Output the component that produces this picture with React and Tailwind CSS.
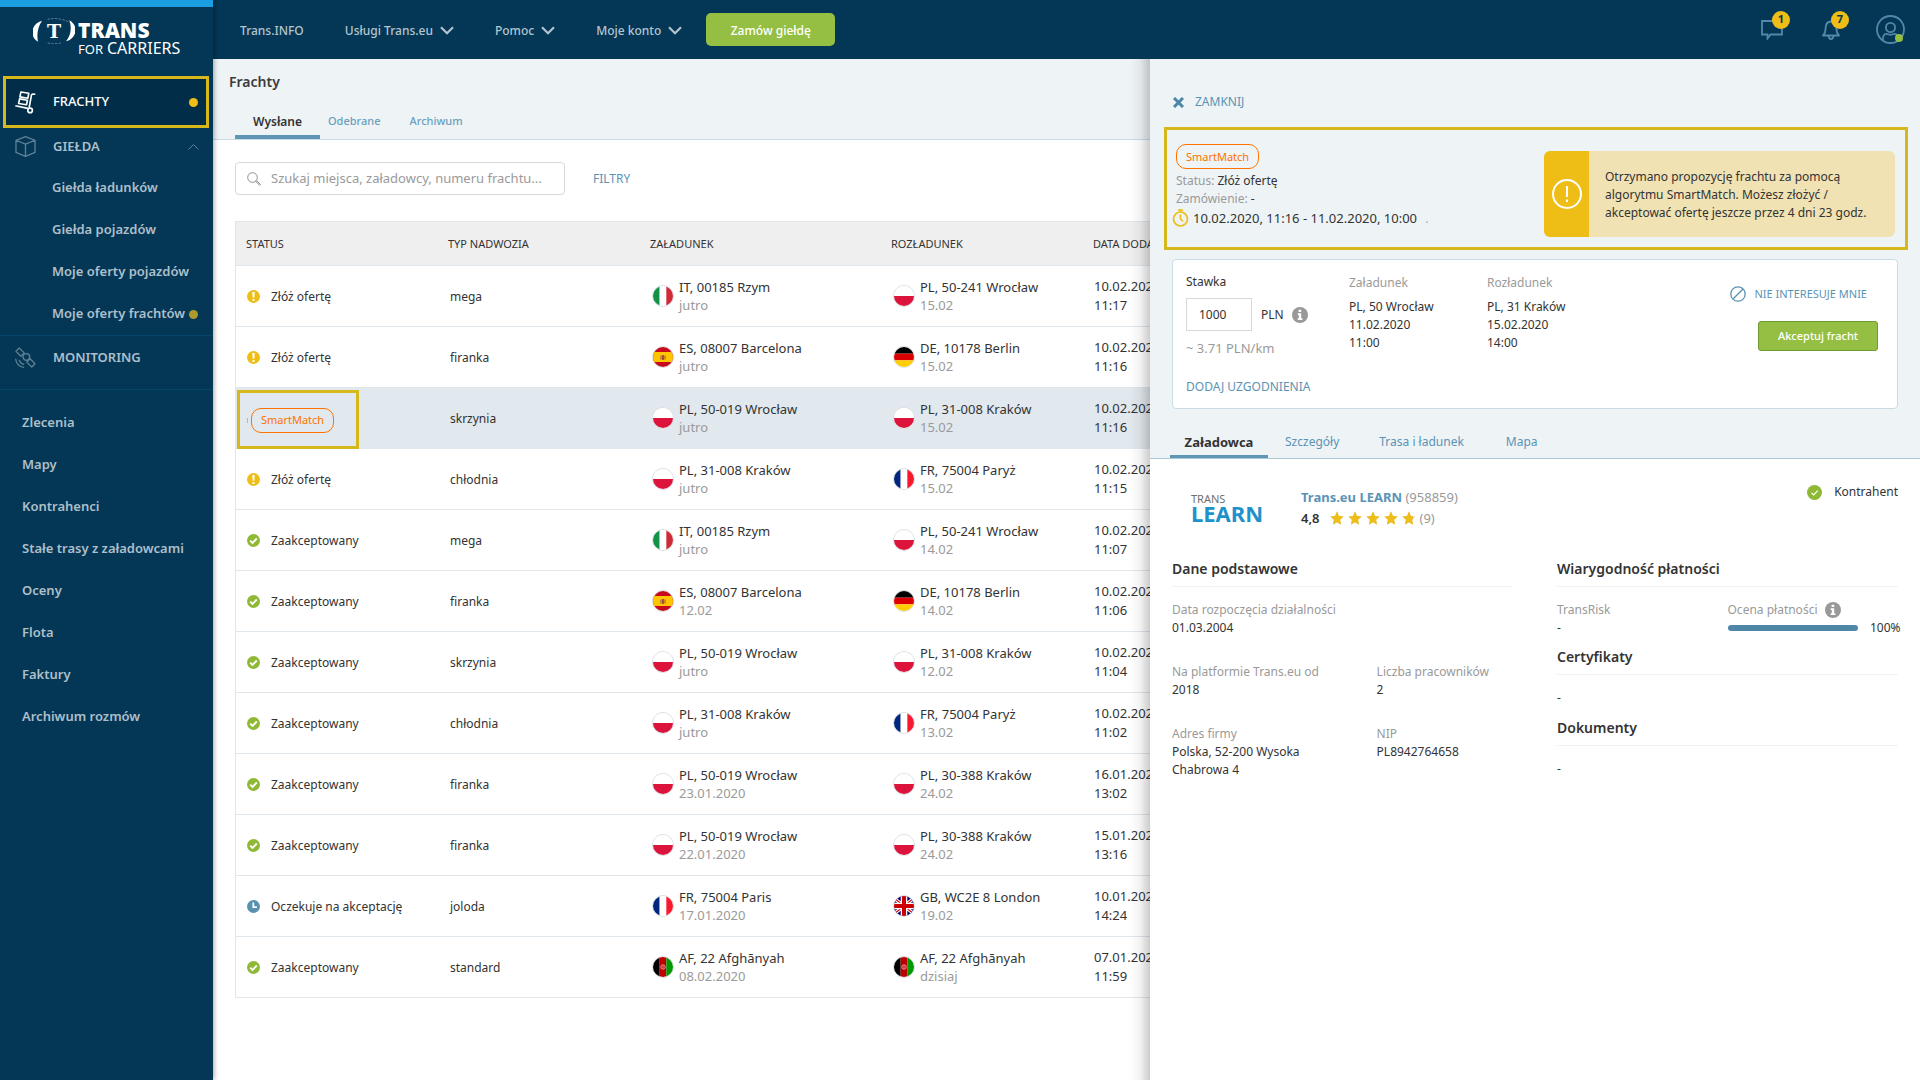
const NAV = [
  { label: "Trans.INFO", menu: false },
  { label: "Usługi Trans.eu", menu: true },
  { label: "Pomoc", menu: true },
  { label: "Moje konto", menu: true },
];

const EXCHANGE = [
  { label: "Giełda ładunków" },
  { label: "Giełda pojazdów" },
  { label: "Moje oferty pojazdów" },
  { label: "Moje oferty frachtów", dot: true },
];

const LINKS = [
  "Zlecenia",
  "Mapy",
  "Kontrahenci",
  "Stałe trasy z załadowcami",
  "Oceny",
  "Flota",
  "Faktury",
  "Archiwum rozmów",
];

const ROWS = [
  ["offer", "mega", "it", "IT, 00185 Rzym", "jutro", "pl", "PL, 50-241 Wrocław", "15.02", "10.02.2020", "11:17"],
  ["offer", "firanka", "es", "ES, 08007 Barcelona", "jutro", "de", "DE, 10178 Berlin", "15.02", "10.02.2020", "11:16"],
  ["smart", "skrzynia", "pl", "PL, 50-019 Wrocław", "jutro", "pl", "PL, 31-008 Kraków", "15.02", "10.02.2020", "11:16"],
  ["offer", "chłodnia", "pl", "PL, 31-008 Kraków", "jutro", "fr", "FR, 75004 Paryż", "15.02", "10.02.2020", "11:15"],
  ["done", "mega", "it", "IT, 00185 Rzym", "jutro", "pl", "PL, 50-241 Wrocław", "14.02", "10.02.2020", "11:07"],
  ["done", "firanka", "es", "ES, 08007 Barcelona", "12.02", "de", "DE, 10178 Berlin", "14.02", "10.02.2020", "11:06"],
  ["done", "skrzynia", "pl", "PL, 50-019 Wrocław", "jutro", "pl", "PL, 31-008 Kraków", "12.02", "10.02.2020", "11:04"],
  ["done", "chłodnia", "pl", "PL, 31-008 Kraków", "jutro", "fr", "FR, 75004 Paryż", "13.02", "10.02.2020", "11:02"],
  ["done", "firanka", "pl", "PL, 50-019 Wrocław", "23.01.2020", "pl", "PL, 30-388 Kraków", "24.02", "16.01.2020", "13:02"],
  ["done", "firanka", "pl", "PL, 50-019 Wrocław", "22.01.2020", "pl", "PL, 30-388 Kraków", "24.02", "15.01.2020", "13:16"],
  ["wait", "joloda", "fr", "FR, 75004 Paris", "17.01.2020", "gb", "GB, WC2E 8 London", "19.02", "10.01.2020", "14:24"],
  ["done", "standard", "af", "AF, 22 Afghānyah", "08.02.2020", "af", "AF, 22 Afghānyah", "dzisiaj", "07.01.2020", "11:59"],
];

const STATUS_TEXT = { offer: "Złóż ofertę", done: "Zaakceptowany", wait: "Oczekuje na akceptację" };

function Stripes({ colors, vertical }) {
  const size = 20 / colors.length;
  return colors.map((c, i) =>
    vertical ? (
      <rect key={i} x={i * size} y="0" width={size} height="20" fill={c} />
    ) : (
      <rect key={i} x="0" y={i * size} width="20" height={size} fill={c} />
    )
  );
}

function Flag({ code }) {
  return (
    <svg viewBox="0 0 20 20" className="size-[22px] shrink-0 rounded-full border border-[#dcdfe2] bg-white" aria-hidden="true">
      {code === "it" && <Stripes vertical colors={["#129246", "#ffffff", "#ce2b37"]} />}
      {code === "fr" && <Stripes vertical colors={["#00267f", "#ffffff", "#f8192f"]} />}
      {code === "de" && <Stripes colors={["#000000", "#dd0000", "#ffce00"]} />}
      {code === "pl" && <Stripes colors={["#ffffff", "#dc143c"]} />}
      {code === "es" && (
        <g>
          <rect width="20" height="20" fill="#c60b1e" />
          <rect y="5" width="20" height="10" fill="#ffc400" />
          <path d="M7 8.5h1v4H7zM12 8.5h1v4h-1z" fill="#b98a4a" />
          <rect x="8.5" y="8" width="3" height="5" rx="1" fill="#a8502c" />
        </g>
      )}
      {code === "af" && (
        <g>
          <Stripes vertical colors={["#000000", "#bf0000", "#009900"]} />
          <circle cx="10" cy="10" r="2.2" fill="none" stroke="#f0b8b8" strokeWidth="0.8" />
          <path d="M10 8.5v3" stroke="#f0b8b8" strokeWidth="0.8" />
        </g>
      )}
      {code === "gb" && (
        <g>
          <rect width="20" height="20" fill="#000066" />
          <path d="M0 2l20 16M20 2L0 18" stroke="#fff" strokeWidth="3.4" />
          <path d="M0 2l20 16M20 2L0 18" stroke="#cc0000" strokeWidth="1.1" />
          <path d="M10 0v20M0 10h20" stroke="#fff" strokeWidth="6.6" />
          <path d="M10 0v20M0 10h20" stroke="#cc0000" strokeWidth="4" />
        </g>
      )}
    </svg>
  );
}

function StatusIcon({ kind }) {
  return (
    <svg viewBox="0 0 13 13" className="size-[13px] shrink-0" aria-hidden="true">
      <circle cx="6.5" cy="6.5" r="6.5" fill={kind === "offer" ? "#eebe17" : kind === "done" ? "#8fb935" : "#5a91b1"} />
      {kind === "offer" && <path d="M5.3 2h2.4l-.4 5.8H5.7zM5.5 9h2v1.9h-2z" fill="#fff" />}
      {kind === "done" && <path d="M3.2 6.6l2.3 2.3L9.8 4.5" stroke="#fff" strokeWidth="1.9" fill="none" />}
      {kind === "wait" && <path d="M6.3 2.6v4.6h3.6" stroke="#fff" strokeWidth="1.7" fill="none" />}
    </svg>
  );
}

function InfoIcon() {
  return (
    <svg viewBox="0 0 16 16" className="size-4 shrink-0" aria-hidden="true">
      <circle cx="8" cy="8" r="8" fill="#999" />
      <path d="M6.6 2.8h2.6v2.3H6.6zM5.7 6.3h3.5v5h1.2v1.6H5.7v-1.6h1.1V7.9H5.7z" fill="#fff" />
    </svg>
  );
}

function SmartBadge() {
  return (
    <span className="inline-flex h-[25px] w-[83px] items-center justify-center rounded-[10px] border border-[#ff7200] pt-px text-[11px] text-[#ff7200]">
      SmartMatch
    </span>
  );
}

function Chevron() {
  return (
    <svg viewBox="0 0 14 9" className="h-[9px] w-3.5" fill="none" stroke="currentColor" strokeWidth="2.2" aria-hidden="true">
      <path d="M1 1.2l6 6 6-6" />
    </svg>
  );
}

function Logo() {
  return (
    <a href="#start" className="flex pl-[33px] text-white">
      <span className="relative mr-[3px] flex h-[26px] w-[42px] items-center justify-center">
        <svg viewBox="0 0 126 78" className="absolute inset-0 size-full" aria-hidden="true">
          <path d="M27 8C-6 16-12 56 15 71 11 51 13 29 27 8z" fill="#fff" />
          <path d="M99 70c33-9 39-47 10-63 7 20 6 44-10 63z" fill="#fff" />
          <path d="M44 4q20-5 40 0 16 3 26 10M44 75q20 4 40 0" fill="none" stroke="#8fa6b6" strokeWidth="2" strokeDasharray="7 4" />
        </svg>
        <b className="font-['DejaVu_Serif',serif] text-[19px] leading-none font-bold">T</b>
      </span>
      <span className="flex flex-col pt-0.5">
        <b className="text-[21px] leading-5 font-black">TRANS</b>
        <span className="flex items-baseline gap-1 leading-4 font-normal">
          <span className="text-[13px] leading-4">FOR</span>
          <span className="text-base leading-4">CARRIERS</span>
        </span>
      </span>
    </a>
  );
}

function Sidebar() {
  return (
    <aside className="relative z-10 w-[213px] shrink-0 border-t-[7px] border-[#1b9de2] bg-[#033755] text-[13px] font-semibold text-[#aebfca] shadow-[1px_0_5px_rgba(0,0,0,0.35)]">
      <div className="pt-[11px] pb-[19px]">
        <Logo />
      </div>
      <nav>
        <div className="pr-1 pl-[3px]">
          <a href="#frachty" className="flex h-[52px] items-center border-[3px] border-[#d6b81b] bg-[#022d49] pr-2 pl-[9px] font-medium text-white">
            <svg viewBox="0 0 64 70" className="h-[23px] w-[21px]" fill="none" stroke="currentColor" strokeWidth="5" strokeLinejoin="round" aria-hidden="true">
              <path d="M18 3l24 4-3 15-24-4zM14 24l24 4-3 14-24-4zM1 45l38 8M62 10l-7-1q-4 0-5 4l-7 38" />
              <circle cx="46" cy="59" r="7" />
            </svg>
            <span className="ml-[17px] grow">FRACHTY</span>
            <span className="size-[9px] rounded-full bg-[#eebe17]" />
          </a>
        </div>
        <div className="border-b border-[#07466a]">
          <a href="#gielda" className="mb-0.5 flex h-[37px] items-center pr-3.5 pl-[15px]">
            <svg viewBox="0 0 64 64" className="size-[21px] text-[#5f8095]" fill="none" stroke="currentColor" strokeWidth="4" strokeLinejoin="round" aria-hidden="true">
              <path d="M32 2l29 11v37L32 62 3 50V13zM3 13l29 12 29-12M32 25v37" />
            </svg>
            <span className="ml-[17px] grow">GIEŁDA</span>
            <svg viewBox="0 0 11 6" className="h-1.5 w-[11px] text-[#5f8095]" fill="none" stroke="currentColor" aria-hidden="true">
              <path d="M.5 5.5l5-5 5 5" />
            </svg>
          </a>
          {EXCHANGE.map((item) => (
            <a key={item.label} href="#gielda" className="flex h-[42px] items-center gap-1 pl-[52px] whitespace-nowrap">
              {item.label}
              {item.dot && <span className="size-[9px] rounded-full bg-[#ad9a2c]" />}
            </a>
          ))}
        </div>
        <a href="#monitoring" className="flex h-[54px] items-center border-b border-[#07466a] pb-2.5 pl-[15px]">
          <svg viewBox="0 0 64 64" className="size-[21px] text-[#5f8095]" fill="none" stroke="currentColor" strokeWidth="4" strokeLinejoin="round" aria-hidden="true">
            <path d="M13 3L3 13l15 15 10-10zM46 36L36 46l15 15 10-10z" />
            <path d="M24 30q1-11 12-10 9 2 9 10-1 10-10 11-9-1-11-11z" />
            <path d="M13 39q2 11 15 14M2 36q2 24 26 26" />
          </svg>
          <span className="ml-[17px]">MONITORING</span>
        </a>
        <div className="pt-3">
          {LINKS.map((label) => (
            <a key={label} href="#menu" className="flex h-[42px] items-center pl-[22px] whitespace-nowrap">
              {label}
            </a>
          ))}
        </div>
      </nav>
    </aside>
  );
}

function TopBar() {
  return (
    <header className="flex h-[59px] items-center bg-[#033755] pr-[15px] pl-[27px] text-xs text-[#b5c5cf]">
      <nav className="flex items-center gap-[41px] pt-0.5">
        {NAV.map((item) =>
          item.menu ? (
            <button key={item.label} type="button" className="flex items-center gap-[7px] font-medium">
              {item.label}
              <Chevron />
            </button>
          ) : (
            <a key={item.label} href="#info" className="font-medium">
              {item.label}
            </a>
          )
        )}
      </nav>
      <button type="button" className="ml-6 h-[33px] w-[129px] rounded-[5px] bg-[#95bf43] pt-0.5 font-medium text-white">
        Zamów giełdę
      </button>
      <div className="ml-auto flex items-center text-[#5289a8]">
        <button type="button" aria-label="Wiadomości" className="relative mr-[39px]">
          <svg viewBox="0 0 22 20" className="h-5 w-[22px]" fill="none" stroke="currentColor" strokeWidth="1.8" aria-hidden="true">
            <path d="M1 1h20v13.5H9.500L6.500 18.500V14.500H1z" />
          </svg>
          <span className="absolute -top-[9px] left-[11px] flex size-[18px] items-center justify-center rounded-full bg-[#eebe17] text-[11px] font-bold text-[#033755]">1</span>
        </button>
        <button type="button" aria-label="Powiadomienia" className="relative mr-9">
          <svg viewBox="0 0 18 20" className="h-5 w-[18px]" fill="none" stroke="currentColor" strokeWidth="1.8" strokeLinejoin="round" aria-hidden="true">
            <path d="M1 15.500q2.500-2 2.500-6.500Q3.500 1.500 9 1.500T14.500 9q0 4.500 2.500 6.500zM6.500 16q.5 3 2.500 3t2.500-3" />
          </svg>
          <span className="absolute -top-[9px] left-[9px] flex size-[18px] items-center justify-center rounded-full bg-[#eebe17] text-[11px] font-bold text-[#033755]">7</span>
        </button>
        <button type="button" aria-label="Profil" className="relative">
          <svg viewBox="0 0 29 29" className="size-[29px]" fill="none" stroke="currentColor" strokeWidth="1.8" aria-hidden="true">
            <circle cx="14.500" cy="14.500" r="13.500" />
            <circle cx="14.500" cy="12.500" r="4.600" />
            <path d="M6.800 25.500q0-7 4-6.500 3.700 1.500 7.400 0 4-.5 4 6.500" />
          </svg>
          <span className="absolute right-0.5 bottom-0.5 size-2 rounded-full bg-[#95bf43]" />
        </button>
      </div>
    </header>
  );
}

function Place({ code, place, day }) {
  return (
    <div className="flex items-center gap-[5px] pl-3 leading-[18px] whitespace-nowrap">
      <Flag code={code} />
      <div>
        <div>{place}</div>
        <div className="text-[#9a9a9a]">{day}</div>
      </div>
    </div>
  );
}

function FreightTable() {
  return (
    <table className="w-[1650px] table-fixed border-separate border-spacing-0 border border-b-0 border-[#dfe6ec] text-left text-[#333]">
      <colgroup>
        <col className="w-[202px]" />
        <col className="w-[202px]" />
        <col className="w-[241px]" />
        <col className="w-[202px]" />
        <col />
      </colgroup>
      <thead>
        <tr className="h-11 bg-[#efefef] text-[11px]">
          {["STATUS", "TYP NADWOZIA", "ZAŁADUNEK", "ROZŁADUNEK", "DATA DODANIA"].map((h) => (
            <th key={h} className="border-b border-[#dfe6ec] pt-0.5 pl-2.5 font-normal">
              {h}
            </th>
          ))}
        </tr>
      </thead>
      <tbody className="text-[13px]">
        {ROWS.map(([status, type, c1, p1, d1, c2, p2, d2, date, hour], i) => (
          <tr
            key={i}
            className={
              status === "smart"
                ? "h-[61px] bg-[#e1e8ee] [&>td]:border-b [&>td]:border-[#e1e8ee]"
                : "h-[61px] [&>td]:border-b [&>td]:border-[#dfe6ec]"
            }
          >
            <td className="relative pl-[11px] text-xs">
              {status === "smart" ? (
                <div className="flex items-center gap-[3px] pt-1">
                  <span className="h-[5px] w-px bg-[#eebe17]" />
                  <SmartBadge />
                  <span className="absolute top-0.5 left-px h-[59px] w-[122px] border-[3px] border-[#d6b81b]" />
                </div>
              ) : (
                <div className="flex items-center gap-[11px]">
                  <StatusIcon kind={status} />
                  <span className="pt-0.5">{STATUS_TEXT[status]}</span>
                </div>
              )}
            </td>
            <td className="pt-0.5 pl-3 text-xs">{type}</td>
            <td>
              <Place code={c1} place={p1} day={d1} />
            </td>
            <td>
              <Place code={c2} place={p2} day={d2} />
            </td>
            <td className="pl-[11px] leading-[19px]">
              {date}
              <br />
              {hour}
            </td>
          </tr>
        ))}
      </tbody>
    </table>
  );
}

function FreightList() {
  return (
    <main className="min-w-0 flex-[937] overflow-hidden">
      <div className="border-b border-[#c9dce6] bg-[#eef3f6] pt-3.5">
        <h1 className="pl-4 text-sm leading-[18px] font-semibold text-[#3c3c3c]">Frachty</h1>
        <div role="tablist" className="mt-[13px] flex pl-[22px] text-[11px] text-[#6b9fbd]">
          <button type="button" role="tab" aria-selected="true" className="h-[35px] w-[85px] border-b-4 border-[#5f96b5] pt-1 text-xs font-semibold text-[#333]">
            Wysłane
          </button>
          <button type="button" role="tab" className="ml-2 h-[35px] font-medium">
            Odebrane
          </button>
          <button type="button" role="tab" className="ml-[29px] h-[35px] font-medium">
            Archiwum
          </button>
        </div>
      </div>
      <div className="pt-[22px] pl-[22px]">
        <div className="flex items-center gap-7">
          <label className="flex h-[33px] w-[330px] items-center gap-2.5 rounded-sm border border-[#d8d8d8] pl-[11px]">
            <svg viewBox="0 0 14 14" className="size-3.5 shrink-0 text-[#8c8c8c]" fill="none" stroke="currentColor" aria-hidden="true">
              <circle cx="5.500" cy="5.500" r="4.800" />
              <path d="M9 9.500l.8-.8 3.700 3.700-.9.900z" />
            </svg>
            <input
              type="text"
              aria-label="Szukaj frachtu"
              placeholder="Szukaj miejsca, załadowcy, numeru frachtu..."
              className="min-w-0 grow text-[13px] outline-none placeholder:text-[#9a9a9a]"
            />
          </label>
          <button type="button" className="text-xs text-[#5b93b5]">
            FILTRY
          </button>
        </div>
        <div className="mt-[26px]">
          <FreightTable />
        </div>
      </div>
    </main>
  );
}

function Star({ fill }) {
  const d = "M6 .3l1.700 3.900 4 .5-3 2.900.8 4.200L6 9.700l-3.500 2.100.8-4.200-3-2.900 4-.5z";
  return (
    <svg viewBox="0 0 12 12" className="size-[14px]" aria-hidden="true">
      <path d={d} fill="#d9d9d9" />
      <path d={d} fill="#eebe17" style={{ clipPath: `inset(0 ${100 - fill}% 0 0)` }} />
    </svg>
  );
}

function Field({ label, children }) {
  return (
    <div>
      <dt className="text-[#9a9a9a]">{label}</dt>
      <dd>{children}</dd>
    </div>
  );
}

function SectionTitle({ children }) {
  return <h2 className="border-b border-[#edf3f6] pb-2 text-sm leading-[18px] font-semibold">{children}</h2>;
}

function OfferCard() {
  return (
    <section className="mx-[22px] mt-[9px] flex rounded-sm border border-[#c9dce6] bg-white px-[13px] pt-[13px] pb-3">
      <div className="w-[163px]">
        <label htmlFor="rate" className="block text-xs leading-[18px]">
          Stawka
        </label>
        <div className="mt-[7px] flex items-center">
          <input id="rate" type="text" defaultValue="1000" className="h-[33px] w-[66px] border border-[#d8d8d8] pl-3" />
          <span className="ml-[9px]">PLN</span>
          <span className="ml-2">
            <InfoIcon />
          </span>
        </div>
        <div className="mt-2 text-[13px] text-[#9a9a9a]">~ 3.71 PLN/km</div>
        <button type="button" className="mt-[21px] block whitespace-nowrap text-[#5b93b5]">
          DODAJ UZGODNIENIA
        </button>
      </div>
      <div className="w-[138px] pt-px">
        <div className="text-[#9a9a9a]">Załadunek</div>
        <div className="mt-1.5">
          PL, 50 Wrocław
          <br />
          11.02.2020
          <br />
          11:00
        </div>
      </div>
      <div className="pt-px">
        <div className="text-[#9a9a9a]">Rozładunek</div>
        <div className="mt-1.5">
          PL, 31 Kraków
          <br />
          15.02.2020
          <br />
          14:00
        </div>
      </div>
      <div className="ml-auto flex flex-col items-end pt-3 pr-1.5">
        <button type="button" className="mr-[11px] flex items-center gap-2 text-[11px] leading-[18px] text-[#5b93b5]">
          <svg viewBox="0 0 16 16" className="size-4" fill="none" stroke="currentColor" strokeWidth="1.3" aria-hidden="true">
            <circle cx="8" cy="8" r="7.200" />
            <path d="M3.200 12.800l9.600-9.600" />
          </svg>
          NIE INTERESUJE MNIE
        </button>
        <button type="button" className="mt-[18px] h-[30px] w-[120px] rounded-[3px] border border-[#6f9a35] bg-[#95bf43] text-[11px] font-medium text-white">
          Akceptuj fracht
        </button>
      </div>
    </section>
  );
}

function OfferPanel() {
  return (
    <aside className="relative min-w-0 flex-[770] bg-white text-xs leading-[18px] text-[#333]">
      <div className="pointer-events-none absolute inset-y-0 -left-5 w-5 bg-linear-to-l from-black/20 via-black/5 to-transparent" />
      <div className="border-b border-[#a9cad9] bg-[#eef3f6] pt-[34px]">
        <button type="button" className="flex items-center gap-[11px] pl-[23px] leading-[18px] text-[#5b93b5]">
          <svg viewBox="0 0 11 11" className="size-[11px] text-[#4a86a5]" stroke="currentColor" strokeWidth="3" aria-hidden="true">
            <path d="M1 1l9 9M10 1l-9 9" />
          </svg>
          ZAMKNIJ
        </button>
        <section className="mt-4 mr-3 ml-3.5 flex h-[123px] items-start justify-between border-[3px] border-[#d6b81b] pt-3.5 pr-2.5 pl-[9px]">
          <div>
            <SmartBadge />
            <div className="mt-[3px]">
              <span className="text-[#9a9a9a]">Status:</span> Złóż ofertę
            </div>
            <div>
              <span className="text-[#9a9a9a]">Zamówienie:</span> -
            </div>
            <div className="-ml-1 flex items-center gap-1 pt-px text-[13px]">
              <svg viewBox="0 0 17 18" className="h-[18px] w-[17px] text-[#eebe17]" fill="none" stroke="currentColor" strokeWidth="1.700" aria-hidden="true">
                <circle cx="8.500" cy="10" r="7" />
                <path d="M8.500 5.500V10l2.500 2.500M8.500 3V1M6 1h5" />
              </svg>
              10.02.2020, 11:16 - 11.02.2020, 10:00
              <span className="ml-1 text-[#8fb3c8]">.</span>
            </div>
          </div>
          <div role="alert" className="mt-[7px] flex h-[86px] w-[351px] overflow-hidden rounded-[6px] bg-[#f0e2b3]">
            <div className="flex w-[45px] shrink-0 items-center justify-center bg-[#eebe17]">
              <svg viewBox="0 0 30 30" className="size-[30px]" fill="none" stroke="#fff" strokeWidth="2" aria-hidden="true">
                <circle cx="15" cy="15" r="14" />
                <path d="M15 7v11M15 20.500v2.500" />
              </svg>
            </div>
            <p className="self-center pt-0.5 pl-4 whitespace-nowrap">
              Otrzymano propozycję frachtu za pomocą
              <br />
              algorytmu SmartMatch. Możesz złożyć /
              <br />
              akceptować ofertę jeszcze przez 4 dni 23 godz.
            </p>
          </div>
        </section>
        <OfferCard />
        <div role="tablist" className="mt-6 flex pl-5 leading-[18px] text-[#5b93b5]">
          <button type="button" role="tab" aria-selected="true" className="w-[98px] border-b-[3px] border-[#5f96b5] pb-1 text-[13px] leading-[18px] font-bold text-[#333]">
            Załadowca
          </button>
          <button type="button" role="tab" className="ml-[17px] pb-[7px]">
            Szczegóły
          </button>
          <button type="button" role="tab" className="ml-10 pb-[7px]">
            Trasa i ładunek
          </button>
          <button type="button" role="tab" className="ml-[42px] pb-[7px]">
            Mapa
          </button>
        </div>
      </div>
      <div className="px-[22px] pt-6">
        <div className="flex">
          <div className="w-[129px] pt-2.5 pl-[19px]">
            <div className="text-[11px] leading-3 text-[#6f6f6f]">TRANS</div>
            <div className="text-[22px] leading-4 font-bold text-[#2191cb]">LEARN</div>
          </div>
          <div className="pt-[5px] text-[13px]">
            <div className="text-[#9a9a9a]">
              <a href="#firma" className="font-bold text-[#5b93b5]">
                Trans.eu LEARN
              </a>{" "}
              (958859)
            </div>
            <div className="mt-[3px] flex items-center">
              <span className="mr-2.5 font-semibold">4,8</span>
              <span className="mr-1 flex gap-1">
                {[100, 100, 100, 100, 80].map((f, i) => (
                  <Star key={i} fill={f} />
                ))}
              </span>
              <span className="text-[#9a9a9a]">(9)</span>
            </div>
          </div>
          <div className="ml-auto flex items-center gap-3 self-start">
            <svg viewBox="0 0 15 15" className="size-[15px]" aria-hidden="true">
              <circle cx="7.500" cy="7.500" r="7.500" fill="#8fb935" />
              <path d="M4.500 7.800l2.200 2.200 4-4.300" fill="none" stroke="#fff" strokeWidth="1.200" />
            </svg>
            Kontrahent
          </div>
        </div>
        <div className="mt-[33px] grid grid-cols-2 gap-11">
          <section>
            <SectionTitle>Dane podstawowe</SectionTitle>
            <dl className="mt-3.5 grid grid-cols-[3fr_2fr] gap-y-[26px]">
              <div className="col-span-2">
                <Field label="Data rozpoczęcia działalności">01.03.2004</Field>
              </div>
              <Field label="Na platformie Trans.eu od">2018</Field>
              <Field label="Liczba pracowników">2</Field>
              <Field label="Adres firmy">
                Polska, 52-200 Wysoka
                <br />
                Chabrowa 4
              </Field>
              <Field label="NIP">PL8942764658</Field>
            </dl>
          </section>
          <section>
            <SectionTitle>Wiarygodność płatności</SectionTitle>
            <dl className="mt-3.5 grid grid-cols-2">
              <Field label="TransRisk">-</Field>
              <div>
                <dt className="flex items-center gap-[7px] whitespace-nowrap text-[#9a9a9a]">
                  Ocena płatności
                  <InfoIcon />
                </dt>
                <dd className="-mr-1.5 flex items-center gap-3">
                  <span className="h-1.5 grow rounded-full bg-[#4f88a6]" />
                  <span className="w-[34px] shrink-0">100%</span>
                </dd>
              </div>
            </dl>
            <div className="mt-[11px]">
              <SectionTitle>Certyfikaty</SectionTitle>
              <p className="mt-3.5">-</p>
            </div>
            <div className="mt-3">
              <SectionTitle>Dokumenty</SectionTitle>
              <p className="mt-3.5">-</p>
            </div>
          </section>
        </div>
      </div>
    </aside>
  );
}

export default function App() {
  return (
    <div className="flex min-h-screen bg-white font-['Noto_Sans',sans-serif]">
      <Sidebar />
      <div className="flex min-w-0 flex-1 flex-col">
        <TopBar />
        <div className="flex grow">
          <FreightList />
          <OfferPanel />
        </div>
      </div>
    </div>
  );
}
